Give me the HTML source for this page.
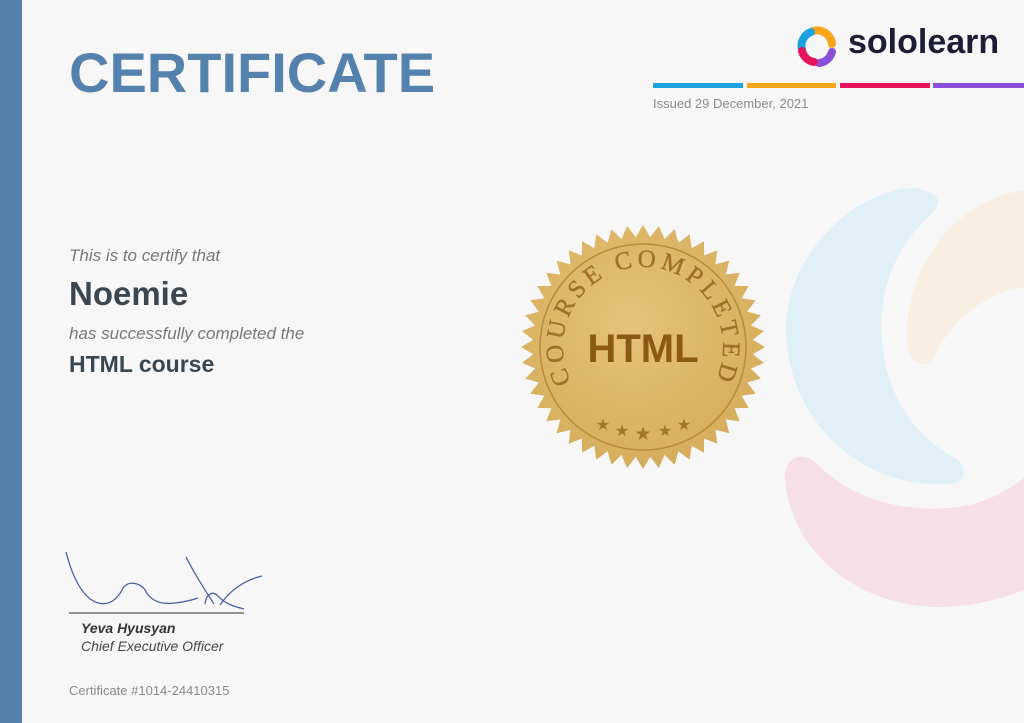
<!DOCTYPE html>
<html><head><meta charset="utf-8"><style>
body{margin:0;width:1024px;height:723px;overflow:hidden;background:#f7f7f7;font-family:"Liberation Sans",sans-serif;position:relative}
.bar{position:absolute;left:0;top:0;width:22px;height:723px;background:#5582ad}
.t{position:absolute;white-space:nowrap}
</style></head><body>
<svg width="1024" height="723" style="position:absolute;left:0;top:0">
<path d="M930 192 C945 200 936 210 925 220 C890 255 878 300 882 340 C886 400 920 440 955 458 C968 466 966 482 950 484 C860 490 790 420 786 335 C783 260 850 190 915 188 Z" fill="#e1eff7"/>
<path d="M1024 190 C960 200 905 260 907 340 C908 370 930 368 935 355 C955 315 990 292 1024 287 Z" fill="#f8efe3"/>
<path d="M790 462 C800 452 812 458 820 467 C860 505 920 515 970 505 C995 498 1012 488 1024 478 L1024 590 C990 603 955 610 920 606 C840 596 790 540 785 480 C784 472 786 466 790 462 Z" fill="#f6dfe7"/>
<defs><radialGradient id="g" cx="45%" cy="40%" r="60%"><stop offset="0" stop-color="#e6c277"/><stop offset="1" stop-color="#d6ad5c"/></radialGradient>
<path id="arc" d="M571.1 382.1 A80 80 0 1 1 716.6 378.3"/></defs>
<polygon id="seal" fill="url(#g)"/>
<circle cx="643" cy="347" r="103" fill="none" stroke="#b98c3b" stroke-width="1.5"/>
<text font-family="Liberation Serif,serif" font-size="25" fill="#a07128" stroke="#a07128" stroke-width="0.4"><textPath href="#arc" textLength="320" lengthAdjust="spacing">COURSE  COMPLETED</textPath></text>
<text x="643" y="362" text-anchor="middle" font-family="Liberation Sans,sans-serif" font-weight="bold" font-size="40" fill="#8a5a12">HTML</text>
<g fill="#a3762a" font-size="16" text-anchor="middle"><text x="603" y="430">★</text><text x="622" y="436">★</text><text x="643" y="440" font-size="19">★</text><text x="665" y="436">★</text><text x="684" y="430">★</text></g>
<g fill="none" stroke="#4a5ea8" stroke-width="1.3">
<path d="M66 552 C72 575 82 598 98 603 C110 606 118 598 122 590 C126 580 140 582 145 590 C150 600 160 605 175 603 C185 602 192 600 198 598"/>
<path d="M186 557 C195 575 205 590 214 604"/>
<path d="M205 604 C206 595 212 590 218 596 C224 603 232 606 244 609"/>
<path d="M220 605 C230 590 245 580 262 576"/></g>
<line x1="69" y1="613" x2="244" y2="613" stroke="#555" stroke-width="1.3"/>
<rect x="653" y="83" width="90" height="5" fill="#1ea1e0"/><rect x="747" y="83" width="89" height="5" fill="#f9a51a"/><rect x="840" y="83" width="90" height="5" fill="#e6135d"/><rect x="933" y="83" width="91" height="5" fill="#8a4fd8"/>
<g transform="translate(817 46)" fill="none" stroke-width="8" stroke-linecap="round">
<path d="M-4 -15 A15 15 0 0 1 15 -2" stroke="#f9a51a"/><path d="M-15 4 A15 15 0 0 1 -6 -14" stroke="#1ea1e0"/><path d="M15 6 A15 15 0 0 1 2 17" stroke="#8a4fd8"/><path d="M-3 16 A15 15 0 0 1 -15 5" stroke="#e6135d"/></g>
</svg>
<div class="bar"></div>
<div class="t" style="left:69px;top:40px;font-size:56px;font-weight:bold;color:#5582ad">CERTIFICATE</div>
<div class="t" style="left:848px;top:23px;font-size:34px;font-weight:bold;color:#1d1d35">sololearn</div>
<div class="t" style="left:653px;top:96px;font-size:13px;color:#8a8a8a">Issued 29 December, 2021</div>
<div class="t" style="left:69px;top:246px;font-size:17px;font-style:italic;color:#777">This is to certify that</div>
<div class="t" style="left:69px;top:275px;font-size:33px;font-weight:bold;color:#3a4750">Noemie</div>
<div class="t" style="left:69px;top:324px;font-size:17px;font-style:italic;color:#777">has successfully completed the</div>
<div class="t" style="left:69px;top:351px;font-size:23px;font-weight:bold;color:#3a4750">HTML course</div>
<div class="t" style="left:81px;top:620px;font-size:14px;font-weight:bold;font-style:italic;color:#333">Yeva Hyusyan</div>
<div class="t" style="left:81px;top:638px;font-size:14px;font-style:italic;color:#444">Chief Executive Officer</div>
<div class="t" style="left:69px;top:683px;font-size:13px;color:#8a8a8a">Certificate #1014-24410315</div>
<script>
var p=[],n=48;for(var i=0;i<n*2;i++){var a=Math.PI*i/n,r=i%2?110:122;p.push((643+r*Math.cos(a)).toFixed(1)+","+(347+r*Math.sin(a)).toFixed(1));}
document.getElementById('seal').setAttribute('points',p.join(' '));
</script>
</body></html>
